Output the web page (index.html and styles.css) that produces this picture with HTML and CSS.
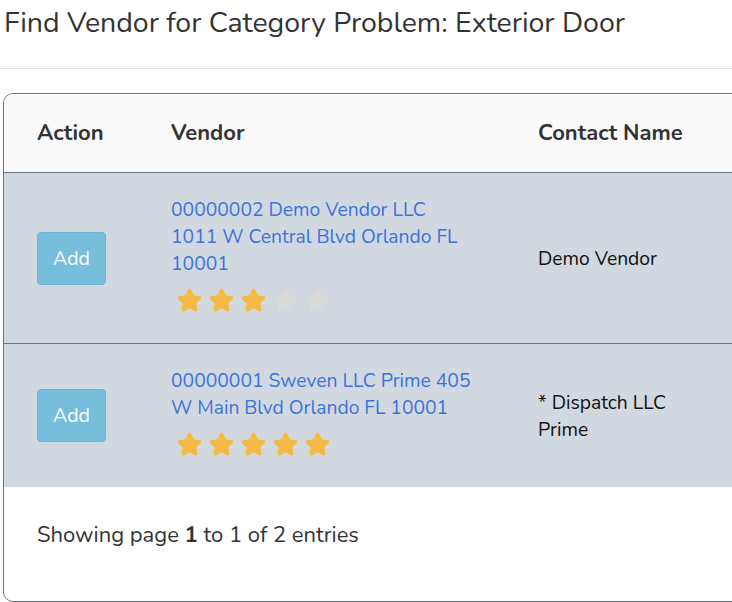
FILE: index.html
```html
<!DOCTYPE html>
<html lang="en">
    <head>
        <meta charset="UTF-8">
        <meta name="viewport" content="width=device-width, initial-scale=1.0">
        <link rel="stylesheet" href="styles.css">
        <title>Find Vendor</title>
    </head>
    <body>
        <!--======================= title =======================-->
        <h1 class="pageTitle">Find Vendor for Category Problem: Exterior Door</h1>
        <hr class="titleRule">

        <!--======================= vendor table =======================-->
        <div class="vendorCard">
            <table class="vendorTable">
                <colgroup>
                    <col class="colAction">
                    <col class="colVendor">
                    <col class="colContact">
                </colgroup>
                <thead>
                    <tr>
                        <th>Action</th>
                        <th>Vendor</th>
                        <th>Contact Name</th>
                    </tr>
                </thead>
                <tbody>
                    <tr>
                        <td class="tdAction"><button class="addButton">Add</button></td>
                        <td class="tdVendor">
                            <a href="#" class="vendorLink">00000002 Demo Vendor LLC<br>1011 W Central Blvd Orlando FL<br>10001</a>
                            <div class="stars">
                                <svg class="star on" viewBox="0 0 24 24"><polygon points="12,3 14.8,8.8 21,9.6 16.5,13.9 17.6,20.2 12,17.1 6.4,20.2 7.5,13.9 3,9.6 9.2,8.8"/></svg>
                                <svg class="star on" viewBox="0 0 24 24"><polygon points="12,3 14.8,8.8 21,9.6 16.5,13.9 17.6,20.2 12,17.1 6.4,20.2 7.5,13.9 3,9.6 9.2,8.8"/></svg>
                                <svg class="star on" viewBox="0 0 24 24"><polygon points="12,3 14.8,8.8 21,9.6 16.5,13.9 17.6,20.2 12,17.1 6.4,20.2 7.5,13.9 3,9.6 9.2,8.8"/></svg>
                                <svg class="star off" viewBox="0 0 24 24"><polygon points="12,3 14.8,8.8 21,9.6 16.5,13.9 17.6,20.2 12,17.1 6.4,20.2 7.5,13.9 3,9.6 9.2,8.8"/></svg>
                                <svg class="star off" viewBox="0 0 24 24"><polygon points="12,3 14.8,8.8 21,9.6 16.5,13.9 17.6,20.2 12,17.1 6.4,20.2 7.5,13.9 3,9.6 9.2,8.8"/></svg>
                            </div>
                        </td>
                        <td class="tdContact">Demo Vendor</td>
                    </tr>
                    <tr>
                        <td class="tdAction"><button class="addButton">Add</button></td>
                        <td class="tdVendor">
                            <a href="#" class="vendorLink">00000001 Sweven LLC Prime 405<br>W Main Blvd Orlando FL 10001</a>
                            <div class="stars">
                                <svg class="star on" viewBox="0 0 24 24"><polygon points="12,3 14.8,8.8 21,9.6 16.5,13.9 17.6,20.2 12,17.1 6.4,20.2 7.5,13.9 3,9.6 9.2,8.8"/></svg>
                                <svg class="star on" viewBox="0 0 24 24"><polygon points="12,3 14.8,8.8 21,9.6 16.5,13.9 17.6,20.2 12,17.1 6.4,20.2 7.5,13.9 3,9.6 9.2,8.8"/></svg>
                                <svg class="star on" viewBox="0 0 24 24"><polygon points="12,3 14.8,8.8 21,9.6 16.5,13.9 17.6,20.2 12,17.1 6.4,20.2 7.5,13.9 3,9.6 9.2,8.8"/></svg>
                                <svg class="star on" viewBox="0 0 24 24"><polygon points="12,3 14.8,8.8 21,9.6 16.5,13.9 17.6,20.2 12,17.1 6.4,20.2 7.5,13.9 3,9.6 9.2,8.8"/></svg>
                                <svg class="star on" viewBox="0 0 24 24"><polygon points="12,3 14.8,8.8 21,9.6 16.5,13.9 17.6,20.2 12,17.1 6.4,20.2 7.5,13.9 3,9.6 9.2,8.8"/></svg>
                            </div>
                        </td>
                        <td class="tdContact">* Dispatch LLC<br>Prime</td>
                    </tr>
                </tbody>
            </table>

            <!--======================= paging info =======================-->
            <div class="tableInfo">Showing page <b>1</b> to 1 of 2 entries</div>
        </div>
    </body>
</html>
```

FILE: styles.css
```css
html, body{
    overflow: hidden;
}

body{
    margin: 0;
    font-family: Nunito, Lato, "Noto Sans", sans-serif;
    color: rgb(51, 51, 51);
    background-color: white;
}

/*************************************************************************************************/

/* title */
.pageTitle{
    margin: 0;
    padding: 6px 4px 0;
    font-size: 28.5px;
    font-weight: 400;
    line-height: 34px;
    color: rgb(51, 51, 51);
}

.titleRule{
    border: none;
    border-top: 1px solid rgb(229, 229, 229);
    margin: 28px 0 24px;
}

/*************************************************************************************************/

/* card holding the table */
.vendorCard{
    margin-left: 3px;
    width: 800px;
    height: 507px;
    border: solid 1px rgb(108, 117, 128);
    border-radius: 10px;
    overflow: hidden;
}

.vendorTable{
    border-collapse: collapse;
    table-layout: fixed;
    width: 100%;
}

.colAction{
    width: 134px;
}

.colVendor{
    width: 367px;
}

.vendorTable th{
    height: 78px;
    padding: 0 0 0 33px;
    text-align: left;
    font-size: 22px;
    font-weight: 700;
    background-color: rgb(250, 250, 250);
    border-bottom: 1px solid rgb(108, 117, 128);
}

.vendorTable td{
    padding: 23px 0 29px 33px;
    background-color: rgb(209, 216, 224);
    font-size: 19.3px;
    line-height: 27px;
    vertical-align: middle;
}

.vendorTable td.tdAction,
.vendorTable td.tdContact{
    padding-top: 26px;
    padding-bottom: 26px;
}

.vendorTable tbody tr:first-child td{
    border-bottom: 1px solid rgb(108, 117, 128);
}

.tdContact{
    color: rgb(17, 17, 17);
}

/*************************************************************************************************/

/* add button */
.addButton{
    display: block;
    width: 69px;
    height: 53px;
    padding: 0;
    font-family: inherit;
    font-size: 19.5px;
    color: white;
    background-color: rgb(118, 190, 219);
    border: 1px solid rgb(108, 181, 213);
    border-radius: 4px;
    cursor: pointer;
}

/*************************************************************************************************/

/* vendor link and rating */
.vendorLink{
    color: rgb(59, 115, 221);
    text-decoration: none;
}

.stars{
    display: flex;
    gap: 5px;
    margin: 10px 0 0 5px;
}

.star{
    width: 27px;
    height: 27px;
}

.star polygon{
    stroke-width: 3;
    stroke-linejoin: round;
}

.star.on polygon{
    fill: rgb(245, 185, 69);
    stroke: rgb(245, 185, 69);
}

.star.off polygon{
    fill: rgb(218, 218, 218);
    stroke: rgb(218, 218, 218);
}

/*************************************************************************************************/

/* paging info */
.tableInfo{
    padding: 35px 0 0 33px;
    font-size: 22px;
    line-height: 27px;
}
```
